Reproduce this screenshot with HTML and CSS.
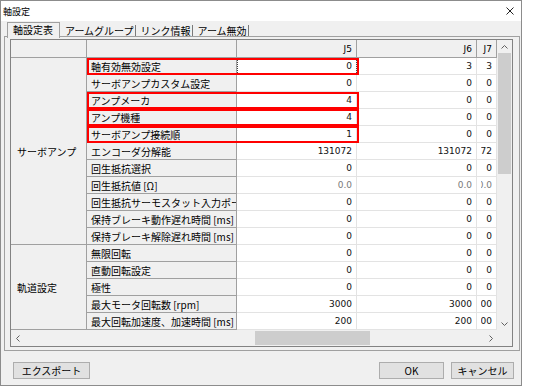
FILE: index.html
```html
<!DOCTYPE html>
<html lang="ja">
<head>
    <meta charset="UTF-8">
    <title>軸設定</title>
    <link rel="stylesheet" href="styles.css">
</head>
<body>

    <div class="window">
        <div class="titlebar">
            <span class="title">軸設定</span>
            <span class="close">
                <svg width="8" height="8" viewBox="0 0 8 8"><path d="M0.5 0.5 L7.5 7.5 M7.5 0.5 L0.5 7.5" stroke="#222" stroke-width="1" fill="none"/></svg>
            </span>
        </div>

        <div class="client">
            <ul class="tabs">
                <li class="tab active">軸設定表</li>
                <li class="tab">アームグループ</li>
                <li class="tab">リンク情報</li>
                <li class="tab">アーム無効</li>
            </ul>

            <div class="tab-page">
                <div class="grid-frame">
                    <div class="grid-main">
                        <div class="viewport">
                            <div class="sheet">
                                <!-- header -->
                                <div class="hd"></div>
                                <div class="hd"></div>
                                <div class="hd">J5</div>
                                <div class="hd">J6</div>
                                <div class="hd">J7</div>

                                <div class="cat cat-servo">サーボアンプ</div>
                                <div class="cat cat-orbit">軌道設定</div>

                                <!-- marked = row outlined in red -->
                                <div class="name marked"><span>軸有効無効設定</span></div>
                                <div class="val focus">0</div><div class="val">3</div><div class="val">3</div>
                                <div class="name"><span>サーボアンプカスタム設定</span></div>
                                <div class="val">0</div><div class="val">0</div><div class="val">0</div>
                                <div class="name marked"><span>アンプメーカ</span></div>
                                <div class="val">4</div><div class="val">0</div><div class="val">0</div>
                                <div class="name marked"><span>アンプ機種</span></div>
                                <div class="val">4</div><div class="val">0</div><div class="val">0</div>
                                <div class="name marked"><span>サーボアンプ接続順</span></div>
                                <div class="val">1</div><div class="val">0</div><div class="val">0</div>
                                <div class="name"><span>エンコーダ分解能</span></div>
                                <div class="val">131072</div><div class="val">131072</div><div class="val">131072</div>
                                <div class="name"><span>回生抵抗選択</span></div>
                                <div class="val">0</div><div class="val">0</div><div class="val">0</div>
                                <div class="name"><span>回生抵抗値 [Ω]</span></div>
                                <div class="val dim">0.0</div><div class="val dim">0.0</div><div class="val dim">0.0</div>
                                <div class="name"><span>回生抵抗サーモスタット入力ポート</span></div>
                                <div class="val">0</div><div class="val">0</div><div class="val">0</div>
                                <div class="name"><span>保持ブレーキ動作遅れ時間 [ms]</span></div>
                                <div class="val">0</div><div class="val">0</div><div class="val">0</div>
                                <div class="name"><span>保持ブレーキ解除遅れ時間 [ms]</span></div>
                                <div class="val">0</div><div class="val">0</div><div class="val">0</div>

                                <div class="name"><span>無限回転</span></div>
                                <div class="val">0</div><div class="val">0</div><div class="val">0</div>
                                <div class="name"><span>直動回転設定</span></div>
                                <div class="val">0</div><div class="val">0</div><div class="val">0</div>
                                <div class="name"><span>極性</span></div>
                                <div class="val">0</div><div class="val">0</div><div class="val">0</div>
                                <div class="name"><span>最大モータ回転数 [rpm]</span></div>
                                <div class="val">3000</div><div class="val">3000</div><div class="val">3000</div>
                                <div class="name"><span>最大回転加速度、加速時間 [ms]</span></div>
                                <div class="val">200</div><div class="val">200</div><div class="val">200</div>
                            </div>
                        </div>
                        <div class="vscroll">
                            <div class="arrow">
                                <svg width="7" height="4" viewBox="0 0 7 4"><path d="M0.5 3.5 L3.5 0.5 L6.5 3.5" stroke="#606060" fill="none"/></svg>
                            </div>
                            <div class="track"><div class="thumb"></div></div>
                            <div class="arrow">
                                <svg width="7" height="4" viewBox="0 0 7 4"><path d="M0.5 0.5 L3.5 3.5 L6.5 0.5" stroke="#606060" fill="none"/></svg>
                            </div>
                        </div>
                    </div>
                    <div class="grid-bottom">
                        <div class="hscroll">
                            <div class="arrow">
                                <svg width="4" height="7" viewBox="0 0 4 7"><path d="M3.5 0.5 L0.5 3.5 L3.5 6.5" stroke="#606060" fill="none"/></svg>
                            </div>
                            <div class="track"><div class="thumb"></div></div>
                            <div class="arrow">
                                <svg width="4" height="7" viewBox="0 0 4 7"><path d="M0.5 0.5 L3.5 3.5 L0.5 6.5" stroke="#606060" fill="none"/></svg>
                            </div>
                        </div>
                        <div class="corner"></div>
                    </div>
                </div>
            </div>

            <div class="buttons">
                <button class="btn btn-export">エクスポート</button>
                <div class="spacer"></div>
                <button class="btn btn-ok">OK</button>
                <button class="btn btn-cancel">キャンセル</button>
            </div>
        </div>
    </div>

</body>
</html>
```

FILE: styles.css
```css
:root {
    --face: #f0f0f0;
    --line: #a0a0a0;
    --light-line: #e3e3e3;
    --thumb: #cdcdcd;
}
body {
    margin: 0;
    background: #fff;
    font-family: "Noto Sans CJK JP", sans-serif;
    font-size: 10px;
    color: #000;
}

/* Window frame */
.window {
    width: 520px; height: 384px;
    border: 1px solid #8c8c8c;
    background: var(--face);
    display: flex; flex-direction: column;
}
.titlebar {
    height: 20px; background: #fff;
    display: flex; align-items: center; justify-content: space-between;
    padding: 0 7px 0 2px;
}
.title { font-size: 9px; }
.close { display: flex; }

.client {
    flex: 1;
    display: flex; flex-direction: column;
    padding: 0 1px 0 3px;
}

/* Tabs */
.tabs {
    list-style: none; margin: 0; padding: 0 0 0 3px;
    height: 15px; display: flex;
}
.tab {
    margin-top: 4px; height: 11px; line-height: 11px;
    padding: 0 1px 0 5px;
    border-right: 1px solid #7a7a7a;
    white-space: nowrap;
}
.tab.active {
    position: relative; z-index: 1;
    margin-top: 1px; height: 15px; line-height: 14px;
    padding: 0 6px 0 5px;
    border: 1px solid var(--line); border-bottom: none;
    background: var(--face);
}
.tab-page {
    height: 315px; box-sizing: border-box;
    border: 1px solid var(--line);
    padding: 2px 6px 3px 5px;
}

/* Grid */
.grid-frame {
    border: 1px solid #828282;
    background: #fff;
}
.grid-main { display: flex; height: 290px; }
.viewport { width: 486px; overflow: hidden; }
.sheet {
    display: grid;
    grid-template-columns: 76px 150px 120px 120px 20px;
    grid-template-rows: 18px repeat(16, 17px);
}
.sheet > div { box-sizing: border-box; min-width: 0; }
.hd {
    background: var(--face);
    border-right: 1px solid var(--line); border-bottom: 1px solid var(--line);
    display: flex; align-items: center; justify-content: flex-end;
    padding-right: 4px;
    font-family: "DejaVu Sans", sans-serif; font-size: 9px;
}
.cat {
    grid-column: 1;
    background: var(--face);
    border-right: 1px solid var(--line); border-bottom: 1px solid var(--line);
    display: flex; align-items: center;
    padding-left: 6px;
}
.cat-servo { grid-row: 2 / span 11; }
.cat-orbit { grid-row: 13 / span 5; }
.name {
    background: var(--face);
    border-right: 1px solid var(--line); border-bottom: 1px solid var(--line);
    display: flex; align-items: center;
    padding-left: 4px;
    white-space: nowrap;
}
.name span { min-width: 0; overflow: hidden; }
.name.marked { position: relative; }
.name.marked::after {
    content: "";
    position: absolute; z-index: 2;
    left: 0; top: 0; bottom: -1px; right: -123px;
    border: 2px solid #f00;
}
.val {
    border-right: 1px solid var(--light-line); border-bottom: 1px solid var(--light-line);
    display: flex; align-items: center; justify-content: flex-end;
    padding: 0 4px;
    white-space: nowrap;
    overflow: clip; overflow-clip-margin: content-box;
    font-family: "DejaVu Sans", sans-serif; font-size: 9px;
    color: #111;
}
.val.dim { color: #7a7a7a; }
.val.focus { outline: 1px dotted #444; outline-offset: -1px; }

/* Scrollbars */
.vscroll {
    width: 15px; background: var(--face);
    display: flex; flex-direction: column;
}
.vscroll .arrow { height: 13px; display: flex; align-items: center; justify-content: center; }
.vscroll .track { flex: 1; padding: 0 1px; }
.vscroll .thumb { height: 121px; background: var(--thumb); }

.grid-bottom { display: flex; height: 16px; }
.hscroll { flex: 1; display: flex; background: var(--face); }
.hscroll .arrow { width: 13px; display: flex; align-items: center; justify-content: center; }
.hscroll .track { flex: 1; padding: 1px 0; }
.hscroll .thumb { margin-left: 231px; width: 115px; height: 100%; background: var(--thumb); }
.corner { width: 15px; background: var(--face); }

/* Buttons */
.buttons {
    display: flex; gap: 7px;
    margin-top: 11px; padding: 0 6px 0 9px;
}
.spacer { flex: 1; }
.btn {
    height: 17px; padding: 0;
    border: 1px solid #adadad; background: #e1e1e1;
    font-family: "Noto Sans CJK JP", sans-serif; font-size: 10px; line-height: 14px;
    color: #000;
}
.btn-export { width: 77px; }
.btn-ok { width: 65px; }
.btn-cancel { width: 63px; }
```
